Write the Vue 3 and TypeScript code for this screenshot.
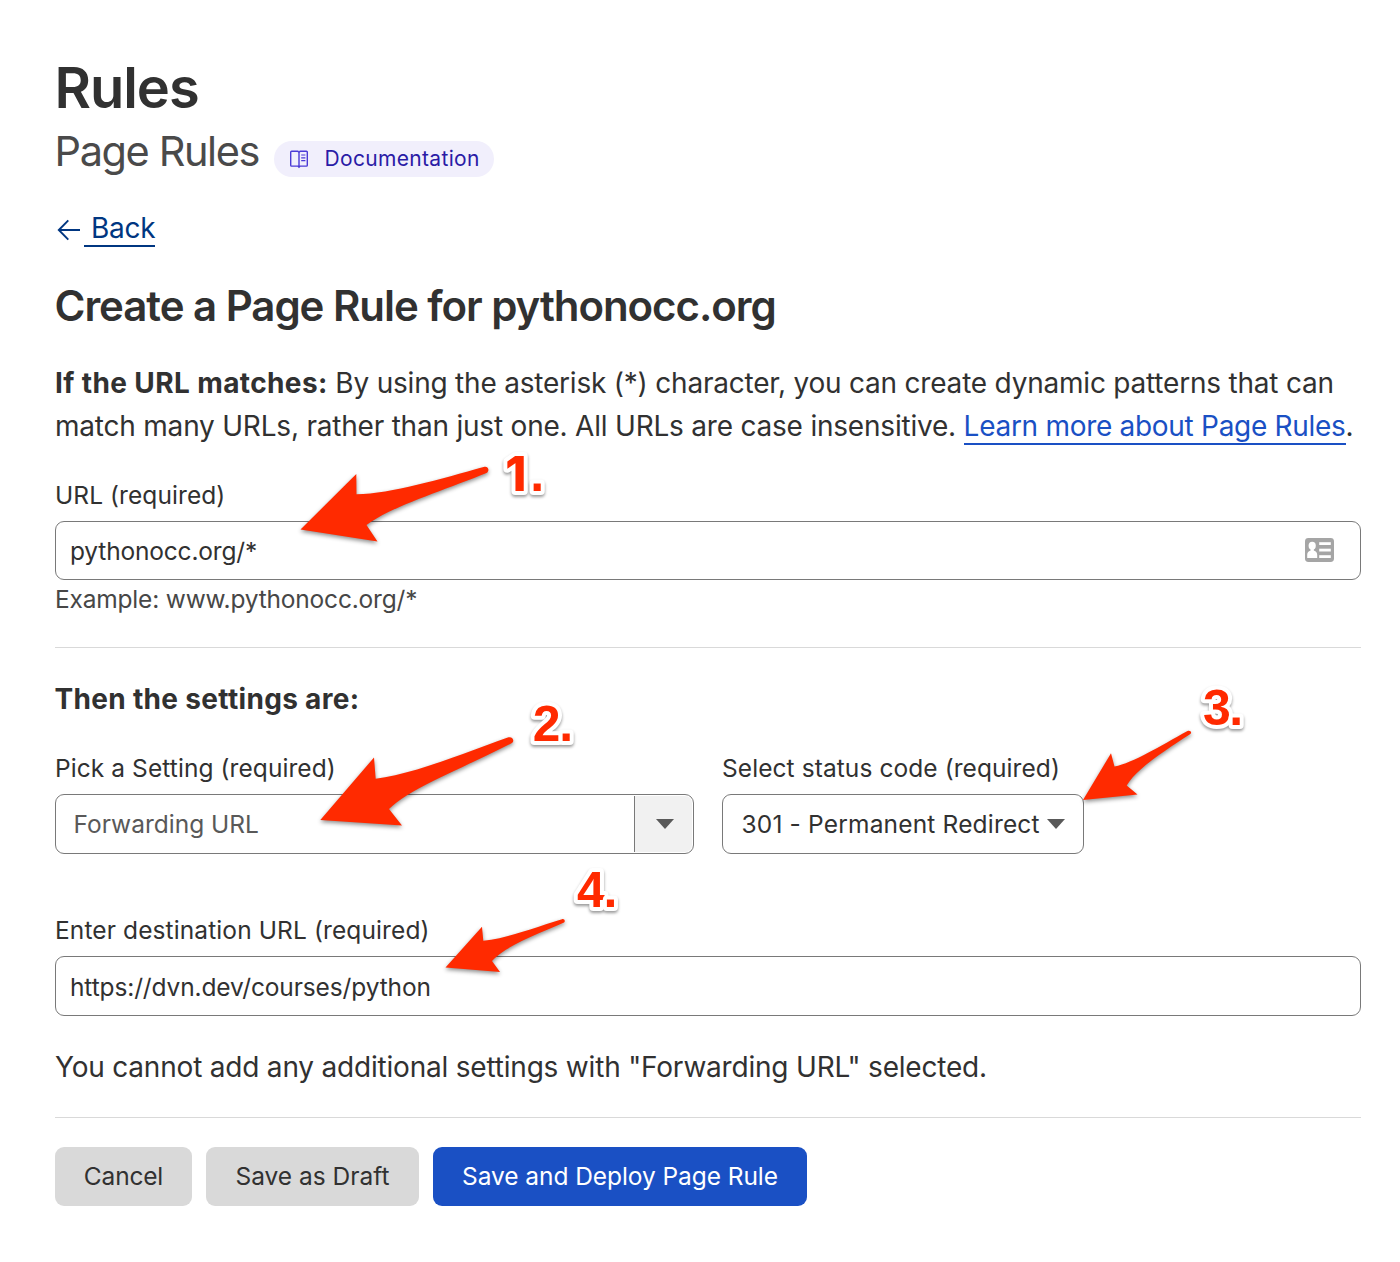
<script setup lang="ts">
interface Callout {
  label: string
  x: number
  y: number
  dotX: number
  plain?: boolean
  arrow: string
}

const callouts: Callout[] = [
  {
    label: '1',
    x: 505.3,
    y: 490.5,
    dotX: 530.3,
    plain: true,
    arrow:
      'M300.5 529.5 L356.3 474 L356.5 494.3 C392 493.5 440 479 484.5 466.7 C489 466 489.5 471.5 486.5 473 C445 490 390 507 366.5 525 L377.5 541.5 Z',
  },
  {
    label: '2',
    x: 532.8,
    y: 741,
    dotX: 559.3,
    arrow:
      'M320.3 820 L374 757.5 L375.7 778.7 C410 775 462 754 508.5 737.3 C513 736.3 515 741.5 511.5 743.3 C470 765 410 788 389 809 L402 825.5 Z',
  },
  {
    label: '3',
    x: 1202.9,
    y: 724.7,
    dotX: 1229.2,
    arrow:
      'M1083 800 L1111 753.3 L1114.5 766.5 C1133 763 1160 746 1187.5 731 C1190.5 729.8 1192.5 732.8 1190 734.3 C1166 750 1137 768 1126.7 785.5 L1137.5 794.5 Z',
  },
  {
    label: '4',
    x: 577,
    y: 906.7,
    dotX: 603.4,
    arrow:
      'M445.5 967.5 L482 926.7 L483.3 940.7 C505 939 533 928 562 919.2 C564.8 918.6 565.8 921.6 563.5 922.8 C538 934 505 946 492 961 L500 972 Z',
  },
]
</script>

<template>
  <main class="page">
    <h1 class="title">Rules</h1>
    <div class="subtitle-row">
      <span class="subtitle">Page Rules</span>
      <a class="badge">
        <svg class="book" width="20" height="20" viewBox="0 0 20 20" fill="none" stroke="#4b3bd6" stroke-width="1.4">
          <path d="M10 3.4 L8.9 2.3 H2.6 Q1.7 2.3 1.7 3.2 V16.2 Q1.7 17.1 2.6 17.1 H8.9 L10 18.2 L11.1 17.1 H17.4 Q18.3 17.1 18.3 16.2 V3.2 Q18.3 2.3 17.4 2.3 H11.1 Z V18" />
          <path d="M12.2 6 H16.4 M12.2 8.8 H16.4 M12.2 11.6 H16.4" stroke-width="1.2" />
        </svg>
        <span class="badge-text">Documentation</span>
      </a>
    </div>

    <div class="back">
      <svg width="24" height="22" viewBox="0 0 24 22" fill="none" stroke="#003681" stroke-width="1.9">
        <path d="M23 11 H2 M11.3 1.4 L1.8 11 L11.3 20.6" />
      </svg>
      <a class="back-link">Back</a>
    </div>

    <h2 class="heading">Create a Page Rule for pythonocc.org</h2>

    <p class="intro">
      <strong>If the URL matches:</strong><span> By using the asterisk (*) character, you can create dynamic patterns that can<br />match many URLs, rather than just one. All URLs are case insensitive. <a class="link">Learn more about Page Rules</a>.</span>
    </p>

    <label class="label url-label">URL (required)</label>
    <div class="field url-field">
      <span class="url-value">pythonocc.org/*</span>
      <svg class="card" width="29" height="24" viewBox="0 0 29 24">
        <rect width="29" height="24" rx="3.4" fill="#a5a5a5" />
        <g fill="#fff">
          <ellipse cx="7.2" cy="7.8" rx="3.6" ry="4" />
          <path d="M5.6 10.5 H8.8 V12.4 C11.3 13.2 12.2 14.8 12.2 17 V20 H2.2 V17 C2.2 14.8 3.1 13.2 5.6 12.4 Z" />
          <rect x="14.2" y="4.2" width="11.6" height="2.8" />
          <rect x="14.2" y="10.7" width="11.6" height="2.8" />
          <rect x="14.2" y="17.2" width="11.6" height="2.8" />
        </g>
      </svg>
    </div>
    <div class="hint">Example: www.pythonocc.org/*</div>

    <hr class="rule" />

    <h3 class="subheading">Then the settings are:</h3>

    <div class="settings">
      <div class="setting">
        <label class="label">Pick a Setting (required)</label>
        <div class="field combo">
          <span class="combo-value">Forwarding URL</span>
          <span class="combo-toggle"><i class="caret"></i></span>
        </div>
      </div>
      <div class="status">
        <label class="label">Select status code (required)</label>
        <div class="field select">
          <span class="select-value">301 - Permanent Redirect</span>
          <i class="caret"></i>
        </div>
      </div>
    </div>

    <label class="label dest-label">Enter destination URL (required)</label>
    <div class="field dest-field"><span class="dest-value">https://dvn.dev/courses/python</span></div>

    <p class="note">You cannot add any additional settings with "Forwarding URL" selected.</p>

    <hr class="rule" />

    <div class="actions">
      <button class="btn cancel">Cancel</button>
      <button class="btn draft">Save as Draft</button>
      <button class="btn primary">Save and Deploy Page Rule</button>
    </div>

    <svg class="callouts" width="1400" height="1262" viewBox="0 0 1400 1262">
      <g v-for="c in callouts" :key="c.label">
        <path class="arrow" :d="c.arrow" />
        <text class="number">
          <tspan :class="{ plain: c.plain }" :x="c.x" :y="c.y">{{ c.label }}</tspan><tspan :x="c.dotX" :y="c.y">.</tspan>
        </text>
      </g>
    </svg>
  </main>
</template>

<style>
body {
  margin: 0;
  background: #fff;
}
</style>

<style scoped>
.page {
  position: relative;
  box-sizing: border-box;
  width: 1400px;
  height: 1262px;
  padding: 53px 39px 0 55px;
  overflow: hidden;
  background: #fff;
  color: #313131;
  font-family: Inter, 'Liberation Sans', sans-serif;
  font-size: 24.5px;
}

h1,
h2,
h3,
p {
  margin: 0;
}

.title {
  margin-left: -0.5px;
  font-size: 56px;
  font-weight: 600;
  line-height: 70px;
  letter-spacing: -1.05px;
}

.subtitle-row {
  display: flex;
  align-items: flex-start;
  height: 56px;
}

.subtitle {
  width: 219px;
  margin-left: -0.4px;
  color: #4a4a4a;
  font-size: 41.5px;
  line-height: 57px;
  letter-spacing: -1.42px;
  white-space: nowrap;
}

.badge {
  display: flex;
  align-items: center;
  box-sizing: border-box;
  width: 220px;
  height: 36px;
  margin: 18px 0 0 0.4px;
  padding-left: 15px;
  border-radius: 18px;
  background: #f1effc;
  color: #2a1ba6;
}

.badge-text {
  margin-left: 15.5px;
  padding-bottom: 2px;
  font-size: 21px;
  letter-spacing: 0.33px;
}

.back {
  display: flex;
  align-items: flex-start;
  margin-top: 31px;
  height: 37px;
}

.back svg {
  margin: 9px 0 0 2px;
}

.back-link {
  margin-left: 3px;
  padding-left: 7px;
  border-bottom: 2px solid #003681;
  box-sizing: border-box;
  height: 37px;
  color: #003681;
  font-size: 28px;
  line-height: 37px;
  letter-spacing: -0.25px;
}

.heading {
  margin-top: 33px;
  margin-left: -0.5px;
  font-size: 42px;
  font-weight: 600;
  line-height: 52px;
  letter-spacing: -1.05px;
  white-space: nowrap;
}

.intro {
  margin-top: 30px;
  font-size: 28px;
  line-height: 43px;
  letter-spacing: -0.21px;
  white-space: nowrap;
}

.intro strong {
  font-weight: 700;
  letter-spacing: 0.38px;
}

.link {
  border-bottom: 2px solid #1a50c4;
  color: #1a50c4;
  letter-spacing: -0.29px;
}

.label {
  display: block;
  line-height: 36px;
  letter-spacing: 0.08px;
  white-space: nowrap;
}

.url-label {
  margin-top: 29px;
}

.field {
  display: flex;
  align-items: center;
  box-sizing: border-box;
  height: 60px;
  margin-top: 8px;
  border: 1px solid #797979;
  border-radius: 9px;
  background: #fff;
  white-space: nowrap;
}

.url-field {
  height: 59px;
  justify-content: space-between;
  padding: 0 26px 1px 14px;
}

.url-value {
  padding-top: 1px;
  letter-spacing: -0.18px;
}

.card {
  display: block;
}

.hint {
  margin-top: 1px;
  line-height: 36px;
  letter-spacing: -0.19px;
  color: #474747;
}

.rule {
  height: 1px;
  margin: 30px 0 0;
  border: 0;
  background: #d9d9d9;
}

.subheading {
  margin-top: 30px;
  margin-left: -0.5px;
  font-size: 28px;
  font-weight: 700;
  line-height: 43px;
  letter-spacing: 0.32px;
}

.settings {
  display: flex;
  gap: 28px;
  margin-top: 29px;
}

.setting {
  width: 639px;
}

.status {
  width: 362px;
}

.combo {
  padding: 1px 1px 1px 17.5px;
}

.combo-value {
  flex: 1;
  color: #595959;
}

.combo-toggle {
  display: flex;
  align-items: center;
  justify-content: center;
  box-sizing: border-box;
  width: 58px;
  height: 56px;
  border-left: 1px solid #797979;
  border-radius: 0 7px 7px 0;
  background: #f1f1f1;
}

.caret {
  width: 18px;
  height: 10px;
  background: #595959;
  clip-path: polygon(0 0, 100% 0, 50% 100%);
}

.combo-toggle .caret {
  margin-left: 3px;
}

.select {
  padding: 0 18px 0 18.5px;
  justify-content: space-between;
}

.select-value {
  letter-spacing: 0.17px;
}

.dest-label {
  margin-top: 58px;
  letter-spacing: 0.11px;
}

.dest-field {
  padding-left: 14px;
}

.dest-value {
  padding-top: 2px;
  letter-spacing: -0.13px;
}

.note {
  margin-top: 30px;
  margin-bottom: 28px;
  font-size: 28px;
  line-height: 43px;
  letter-spacing: -0.2px;
  white-space: nowrap;
}

.note + .rule {
  margin-top: 0;
}

.actions {
  display: flex;
  gap: 14px;
  margin-top: 29px;
}

.btn {
  height: 59px;
  padding: 0 0 2px;
  border: 0;
  border-radius: 9px;
  background: #d9d9d9;
  color: #313131;
  font: inherit;
}

.cancel {
  width: 137px;
  letter-spacing: -0.18px;
}

.draft {
  width: 213px;
}

.primary {
  width: 374px;
  background: #1a50c4;
  color: #fff;
  letter-spacing: -0.07px;
}

.callouts {
  position: absolute;
  top: 0;
  left: 0;
  pointer-events: none;
}

.arrow {
  fill: #ff2a00;
  filter: drop-shadow(0 2px 2px rgba(0, 0, 0, 0.45));
}

.number {
  fill: #ff2a00;
  stroke: #fff;
  stroke-width: 8px;
  stroke-linejoin: round;
  paint-order: stroke;
  font-family: 'Liberation Sans', Arial, sans-serif;
  font-size: 50px;
  font-weight: 700;
  filter: drop-shadow(0 2px 1.5px rgba(0, 0, 0, 0.4));
}

.plain {
  font-family: Inter, sans-serif;
  font-size: 48px;
  font-weight: 800;
}
</style>
